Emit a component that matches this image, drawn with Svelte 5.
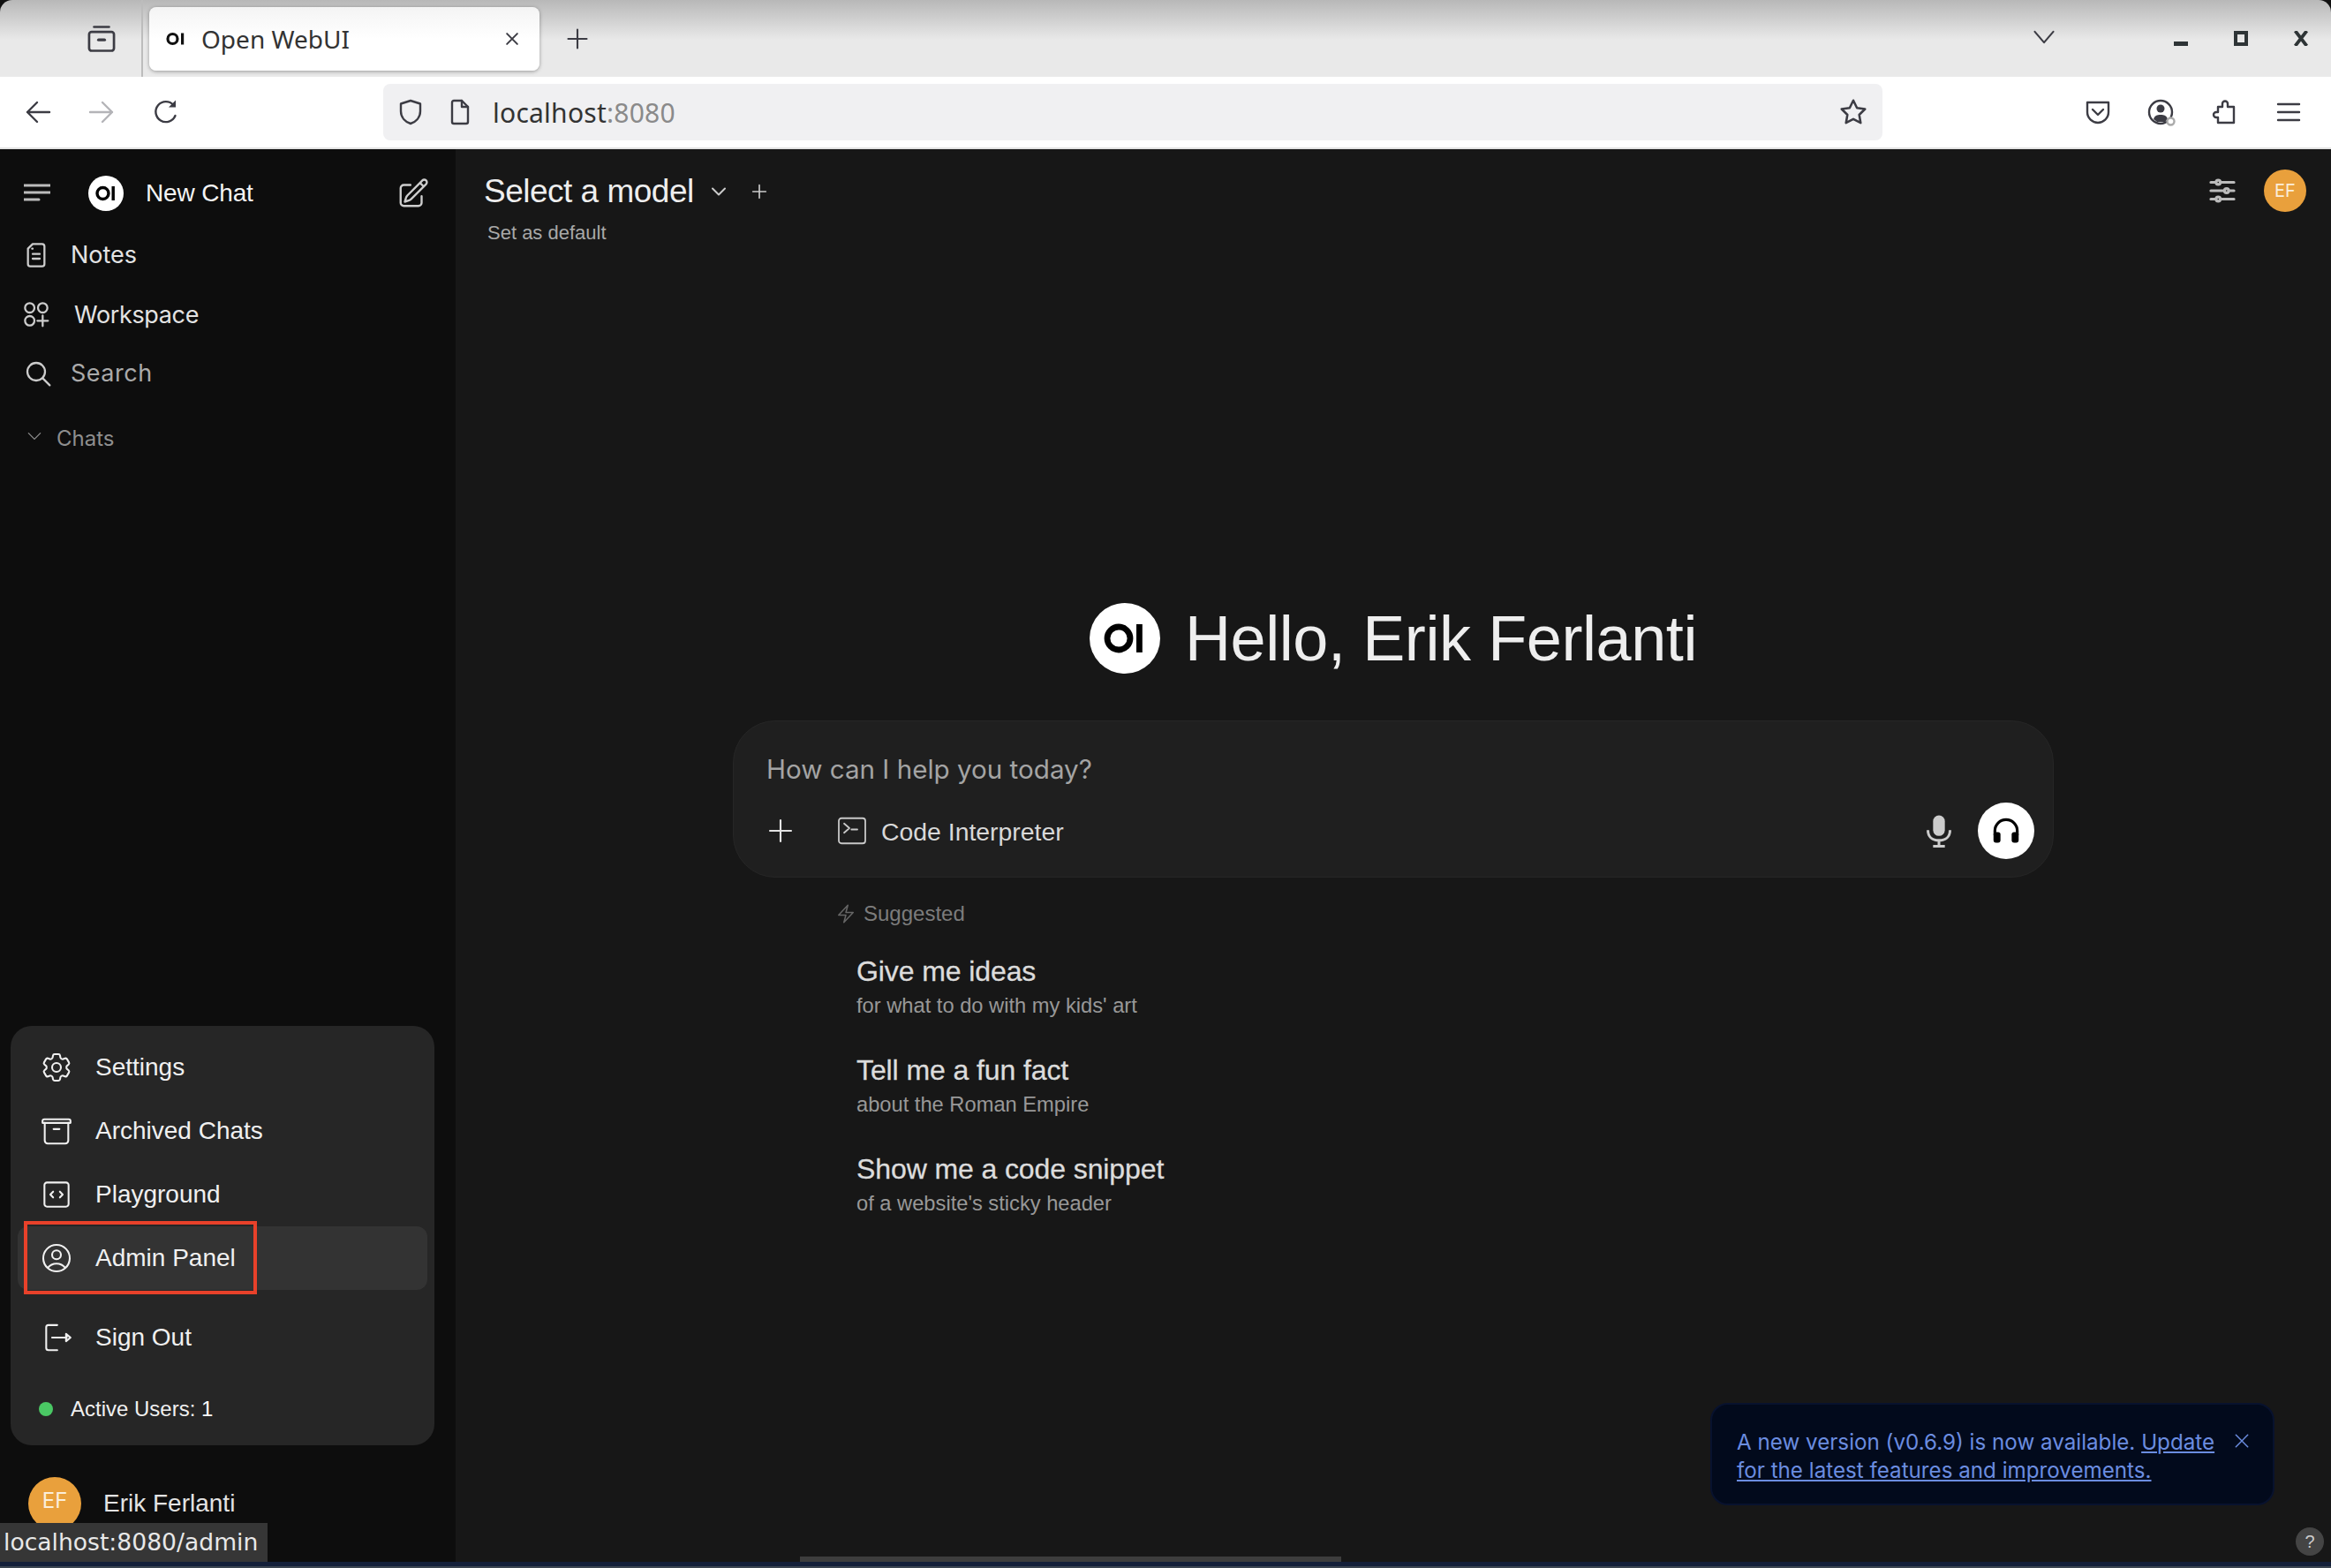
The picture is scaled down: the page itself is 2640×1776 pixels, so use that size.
<script>
	const menuTop = [
		{
			label: 'Settings',
			paths: [
				'M9.594 3.94c.09-.542.56-.94 1.11-.94h2.593c.55 0 1.02.398 1.11.94l.213 1.281c.063.374.313.686.645.87.074.04.147.083.22.127.325.196.72.257 1.075.124l1.217-.456a1.125 1.125 0 0 1 1.37.49l1.296 2.247a1.125 1.125 0 0 1-.26 1.431l-1.003.827c-.293.241-.438.613-.43.992a7.723 7.723 0 0 1 0 .255c-.008.378.137.75.43.991l1.004.827c.424.35.534.955.26 1.43l-1.298 2.247a1.125 1.125 0 0 1-1.369.491l-1.217-.456c-.355-.133-.75-.072-1.076.124a6.47 6.47 0 0 1-.22.128c-.331.183-.581.495-.644.869l-.213 1.281c-.09.543-.56.94-1.11.94h-2.594c-.55 0-1.019-.398-1.11-.94l-.213-1.281c-.062-.374-.312-.686-.644-.87a6.52 6.52 0 0 1-.22-.127c-.325-.196-.72-.257-1.076-.124l-1.217.456a1.125 1.125 0 0 1-1.369-.49l-1.297-2.247a1.125 1.125 0 0 1 .26-1.431l1.004-.827c.292-.24.437-.613.43-.991a6.932 6.932 0 0 1 0-.255c.007-.38-.138-.751-.43-.992l-1.004-.827a1.125 1.125 0 0 1-.26-1.43l1.297-2.247a1.125 1.125 0 0 1 1.37-.491l1.216.456c.356.133.751.072 1.076-.124.072-.044.146-.086.22-.128.332-.183.582-.495.644-.869l.214-1.28Z',
				'M15 12a3 3 0 1 1-6 0 3 3 0 0 1 6 0Z'
			]
		},
		{
			label: 'Archived Chats',
			paths: [
				'M2.5 5.2c0-.7.5-1.2 1.2-1.2h16.6c.7 0 1.2.5 1.2 1.2v1.3H2.5Z',
				'M4 6.5v12a2 2 0 0 0 2 2h12a2 2 0 0 0 2-2v-12',
				'M10 10.7h4'
			]
		},
		{
			label: 'Playground',
			paths: [
				'M5.5 3.8h13a1.7 1.7 0 0 1 1.7 1.7v13a1.7 1.7 0 0 1-1.7 1.7h-13a1.7 1.7 0 0 1-1.7-1.7v-13a1.7 1.7 0 0 1 1.7-1.7Z',
				'M9.7 10 7.8 12l1.9 2',
				'M14.3 10l1.9 2-1.9 2'
			]
		}
	];

	const userCircle =
		'M17.982 18.725A7.488 7.488 0 0 0 12 15.75a7.488 7.488 0 0 0-5.982 2.975m11.963 0a9 9 0 1 0-11.963 0m11.963 0A8.966 8.966 0 0 1 12 21a8.966 8.966 0 0 1-5.982-2.275M15 9.75a3 3 0 1 1-6 0 3 3 0 0 1 6 0Z';

	const suggestions = [
		{ title: 'Give me ideas', sub: "for what to do with my kids' art" },
		{ title: 'Tell me a fun fact', sub: 'about the Roman Empire' },
		{ title: 'Show me a code snippet', sub: "of a website's sticky header" }
	];
</script>

<div class="window">
	<header class="tabbar">
		<svg class="ff tabview" viewBox="0 0 32 32">
			<path d="M8.5 4h15" />
			<rect x="3.5" y="9" width="25" height="19" rx="2.5" />
			<path d="M13 17h6" class="thick" />
		</svg>
		<div class="sep"></div>
		<div class="tab">
			<svg class="fav" viewBox="0 0 24 24">
				<circle cx="8.5" cy="12" r="5.5" fill="none" stroke="#111" stroke-width="3.2" />
				<rect x="18" y="5.5" width="3.2" height="13" fill="#111" />
			</svg>
			<span class="tab-title">Open WebUI</span>
			<svg class="ff tab-x" viewBox="0 0 24 24"><path d="M5 5l14 14M19 5 5 19" /></svg>
		</div>
		<svg class="ff newtab" viewBox="0 0 32 32"><path d="M16 4v24M4 16h24" /></svg>
		<svg class="ff tablist" viewBox="0 0 32 20"><path d="M4 3l12 14L28 3" /></svg>
		<div class="winctl">
			<svg viewBox="0 0 16 17"><rect x="0" y="12" width="16" height="5" fill="#2e3436" /></svg>
			<svg viewBox="0 0 16 17"><path d="M0 0h16v17H0ZM4 4v9h8V4Z" fill="#2e3436" fill-rule="evenodd" /></svg>
			<svg viewBox="0 0 16 17"><path d="M1.500 0l13 17M14.500 0l-13 17" stroke="#2e3436" stroke-width="3.800" fill="none" /></svg>
		</div>
	</header>

	<nav class="navbar">
		<svg class="ff nav-btn" viewBox="0 0 32 32"><path d="M29 16H4M15 5 4 16l11 11" /></svg>
		<svg class="ff nav-btn disabled" viewBox="0 0 32 32"><path d="M3 16h25M17 5l11 11-11 11" /></svg>
		<svg class="ff nav-btn reload" viewBox="0 0 32 32">
			<path d="M26.5 20a11.5 11.5 0 1 1-2-12" />
			<path d="M27 2.5v8h-8Z" class="solid" />
		</svg>
		<div class="urlbar">
			<svg class="ff url-icon" viewBox="0 0 32 32"><path d="M16 3 5 6.500V15c0 7 5 12 11 14 6-2 11-7 11-14V6.500Z" /></svg>
			<svg class="ff url-icon doc" viewBox="0 0 32 32"><path d="M7 5a2 2 0 0 1 2-2h9l7 7v17a2 2 0 0 1-2 2H9a2 2 0 0 1-2-2Z" /><path d="M18 3v7h7" /></svg>
			<span class="url"><span class="host">localhost</span><span class="port">:8080</span></span>
			<svg class="ff star" viewBox="0 0 32 32"><path d="M16 3.500l3.900 8 8.600 1.200-6.200 6.100 1.500 8.700L16 23.400l-7.800 4.100 1.500-8.700-6.200-6.100 8.600-1.200Z" /></svg>
		</div>
		<div class="nav-right">
			<svg class="ff" viewBox="0 0 32 32"><path d="M4 5h24v11c0 7-6 12-12 12S4 23 4 16Z" /><path d="M10 13l6 6 6-6" /></svg>
			<svg class="ff" viewBox="0 0 32 32">
				<circle cx="15" cy="16" r="13" />
				<circle cx="15" cy="12" r="4.500" class="solid" />
				<path d="M7 24c1-4 4-5 8-5s7 1 8 5l-3 3h-9Z" class="solid" />
				<circle cx="26.500" cy="26.500" r="4" class="badge" />
			</svg>
			<svg class="ff" viewBox="0 0 32 32"><path d="M13 10V6.500a3 3 0 0 1 6 0V10h7v18H8v-6H6a3 3 0 0 1 0-6h2v-6Z" /></svg>
			<svg class="ff" viewBox="0 0 32 32"><path d="M4 7h24M4 16h24M4 25h24" /></svg>
		</div>
	</nav>

	<div class="app">
		<aside class="sidebar">
			<div class="side-head">
				<svg class="ic burger" viewBox="0 0 30 24"><path d="M0 3h30M0 11h30M0 19h17" /></svg>
				<svg class="logo small" viewBox="0 0 40 40">
					<circle cx="20" cy="20" r="20" fill="#fff" />
					<circle cx="16.500" cy="20" r="6.500" fill="none" stroke="#000" stroke-width="3.400" />
					<rect x="26.500" y="12" width="3.400" height="16" fill="#000" />
				</svg>
				<span class="new-chat">New Chat</span>
				<svg class="ic edit" viewBox="0 0 24 24"><path d="m16.862 4.487 1.687-1.688a1.875 1.875 0 1 1 2.652 2.652L10.582 16.070a4.500 4.500 0 0 1-1.897 1.130L6 18l.8-2.685a4.500 4.500 0 0 1 1.130-1.897l8.932-8.931Zm0 0L19.500 7.125M18 14v4.750A2.250 2.250 0 0 1 15.750 21H5.250A2.250 2.250 0 0 1 3 18.750V8.250A2.250 2.250 0 0 1 5.250 6H10" /></svg>
			</div>
			<div class="side-row notes">
				<svg class="ic" viewBox="0 0 24 24"><path d="M9 2.500h8a2 2 0 0 1 2 2v15a2 2 0 0 1-2 2H7a2 2 0 0 1-2-2V6.500Z" /><path d="M9 11h6M9 15h6M8.500 6.500h.5" /></svg>
				<span>Notes</span>
			</div>
			<div class="side-row workspace">
				<svg class="ic" viewBox="0 0 24 24"><circle cx="6.500" cy="6.500" r="4" /><circle cx="17.500" cy="6.500" r="4" /><circle cx="6.500" cy="17.500" r="4" /><path d="M17.500 13v9M13 17.500h9" /></svg>
				<span>Workspace</span>
			</div>
			<div class="side-row search">
				<svg class="ic" viewBox="0 0 24 24"><circle cx="10.500" cy="10.500" r="7.500" /><path d="m16 16 6 6" /></svg>
				<span>Search</span>
			</div>
			<div class="chats">
				<svg class="ic" viewBox="0 0 24 24"><path d="m4 8 8 8 8-8" /></svg>
				<span>Chats</span>
			</div>

			<div class="menu">
				{#each menuTop as item}
					<div class="menu-row">
						<svg class="ic" viewBox="0 0 24 24">
							{#each item.paths as d}<path {d} />{/each}
						</svg>
						<span>{item.label}</span>
					</div>
				{/each}
				<div class="menu-row active">
					<svg class="ic" viewBox="0 0 24 24"><path d={userCircle} /></svg>
					<span>Admin Panel</span>
					<div class="callout"></div>
				</div>
				<div class="menu-row signout">
					<svg class="ic" viewBox="0 0 24 24">
						<path d="M12.500 3.500H6.500a1.500 1.500 0 0 0-1.500 1.500v14a1.500 1.500 0 0 0 1.500 1.500h6" />
						<path d="M9 12h10" />
						<path d="M18.500 9.500 21.500 12l-3 2.500Z" />
					</svg>
					<span>Sign Out</span>
				</div>
				<div class="active-users">
					<i class="dot"></i>
					<span>Active Users: <b>1</b></span>
				</div>
			</div>

			<div class="user">
				<div class="avatar big">EF</div>
				<span>Erik Ferlanti</span>
			</div>
			<div class="status">localhost:8080/admin</div>
		</aside>

		<main class="main">
			<div class="topbar">
				<div class="model">
					<div class="model-row">
						<span class="model-name">Select a model</span>
						<svg class="ic chev" viewBox="0 0 24 24"><path d="m5 8.500 7 7 7-7" /></svg>
						<svg class="ic plus" viewBox="0 0 24 24"><path d="M12 4v16M4 12h16" /></svg>
					</div>
					<div class="set-default">Set as default</div>
				</div>
				<svg class="ic sliders" viewBox="0 0 24 24"><path d="M10.500 6h9.750M10.500 6a1.500 1.500 0 1 1-3 0m3 0a1.500 1.500 0 1 0-3 0M3.750 6H7.500m3 12h9.750m-9.750 0a1.500 1.500 0 0 1-3 0m3 0a1.500 1.500 0 0 0-3 0m-3.750 0H7.500m9-6h3.750m-3.750 0a1.500 1.500 0 0 1-3 0m3 0a1.500 1.500 0 0 0-3 0m-9.750 0h9.750" /></svg>
				<div class="avatar">EF</div>
			</div>

			<div class="hello">
				<svg class="logo" viewBox="0 0 40 40">
					<circle cx="20" cy="20" r="20" fill="#fff" />
					<circle cx="16.500" cy="20" r="6.500" fill="none" stroke="#000" stroke-width="3.400" />
					<rect x="26.500" y="12" width="3.400" height="16" fill="#000" />
				</svg>
				<h1>Hello, Erik Ferlanti</h1>
			</div>

			<div class="composer">
				<div class="placeholder">How can I help you today?</div>
				<div class="tools">
					<svg class="ic add" viewBox="0 0 24 24"><path d="M12 3v18M3 12h18" /></svg>
					<svg class="ic term" viewBox="0 0 24 24"><rect x="2" y="2.500" width="20" height="19" rx="2" /><path d="m6 6.500 4 3.500-4 3.500M11.500 11H16" /></svg>
					<span class="code-label">Code Interpreter</span>
					<svg class="mic" viewBox="0 0 24 24">
						<rect x="8" y="1.500" width="8" height="14" rx="4" fill="#ccc" />
						<path d="M4.500 11.500c0 4.500 3 7 7.500 7s7.500-2.500 7.500-7M12 18.500v3.500M8 22.500h8" fill="none" stroke="#ccc" stroke-width="1.800" />
					</svg>
					<div class="voice">
						<svg viewBox="0 0 24 24">
							<path d="M4 15v-3a8 8 0 0 1 16 0v3" fill="none" stroke="#000" stroke-width="2" />
							<rect x="3" y="13" width="5" height="7.500" rx="1.800" fill="#000" />
							<rect x="16" y="13" width="5" height="7.500" rx="1.800" fill="#000" />
						</svg>
					</div>
				</div>
			</div>

			<div class="suggest">
				<div class="suggest-label">
					<svg class="ic" viewBox="0 0 24 24"><path d="M3.750 13.500l10.500-11.250L12 10.500h8.250L9.750 21.750 12 13.500H3.750z" /></svg>
					<span>Suggested</span>
				</div>
				{#each suggestions as s}
					<div class="suggest-item">
						<div class="s-title">{s.title}</div>
						<div class="s-sub">{s.sub}</div>
					</div>
				{/each}
			</div>

			<div class="toast">
				<p>A new version (v0.6.9) is now available. <u>Update for the latest features and improvements.</u></p>
				<svg class="ic toast-x" viewBox="0 0 24 24"><path d="M4 4l16 16M20 4 4 20" /></svg>
			</div>
			<div class="help">?</div>
			<div class="thumb"></div>
		</main>
	</div>
	<div class="bottom"></div>
</div>

<style>
	:global(body) {
		margin: 0;
		background: #101010;
	}

	.window {
		width: 2640px;
		height: 1776px;
		display: flex;
		flex-direction: column;
		overflow: hidden;
		border-radius: 14px 14px 0 0;
		font-family: 'Liberation Sans', Arial, sans-serif;
	}

	svg {
		display: block;
		flex: none;
	}

	/* browser chrome */
	.ff {
		fill: none;
		stroke: #3c3c44;
		stroke-width: 2.4;
		stroke-linejoin: round;
		stroke-linecap: round;
	}

	.ff .solid {
		fill: #3c3c44;
		stroke: none;
	}

	.ff .badge {
		fill: #fff;
		stroke: #aaa;
	}

	.ff .thick {
		stroke-width: 3;
	}

	.tabbar {
		height: 87px;
		display: flex;
		align-items: center;
		position: relative;
		background: linear-gradient(#b8b8b8, #e9e9e9 52%, #e9e9e9);
	}

	.tabview {
		width: 36px;
		height: 36px;
		margin-left: 97px;
	}

	.sep {
		width: 2px;
		height: 87px;
		margin-left: 27px;
		background: #bcbcbc;
	}

	.tab {
		width: 442px;
		height: 72px;
		margin-left: 7px;
		box-sizing: border-box;
		padding: 0 21px 0 18px;
		display: flex;
		align-items: center;
		background: linear-gradient(#f4f4f4, #fff 50%);
		border-radius: 8px;
		box-shadow: 0 1px 4px rgba(0, 0, 0, 0.35);
	}

	.fav {
		width: 24px;
		height: 24px;
	}

	.tab-title {
		margin-left: 17px;
		font: 28px 'Noto Sans', sans-serif;
		color: #333;
	}

	.tab-x {
		width: 20px;
		height: 20px;
		margin-left: auto;
	}

	.newtab {
		width: 28px;
		height: 28px;
		margin-left: 29px;
	}

	.tablist {
		width: 28px;
		height: 18px;
		margin-left: auto;
		margin-right: 133px;
		margin-bottom: 3px;
	}

	.winctl {
		display: flex;
		gap: 52px;
		margin-right: 26px;
	}

	.winctl svg {
		width: 16px;
		height: 17px;
	}

	.navbar {
		height: 80px;
		display: flex;
		align-items: center;
		background: #fff;
		border-bottom: 2px solid #e2e2e2;
	}

	.nav-btn {
		width: 32px;
		height: 32px;
		margin-left: 40px;
	}

	.nav-btn:first-child {
		margin-left: 27px;
	}

	.nav-btn.reload {
		margin-left: 41px;
	}

	.nav-btn.reload + .urlbar {
		margin-left: 230px;
	}

	.nav-btn.disabled {
		stroke: #b4b4b8;
	}

	.urlbar {
		width: 1698px;
		height: 64px;
		box-sizing: border-box;
		padding: 0 16px 0 15px;
		display: flex;
		align-items: center;
		background: #f0f0f2;
		border-radius: 8px;
	}

	.url-icon {
		width: 32px;
		height: 32px;
	}

	.url-icon.doc {
		margin-left: 24px;
	}

	.url {
		margin-left: 21px;
		font: 30px 'Noto Sans', sans-serif;
		letter-spacing: 0.25px;
	}

	.host {
		color: #333;
	}

	.port {
		color: #8a8a8a;
	}

	.star {
		width: 34px;
		height: 34px;
		margin-left: auto;
	}

	.nav-right {
		display: flex;
		gap: 40px;
		margin-left: 228px;
	}

	.nav-right svg {
		width: 32px;
		height: 32px;
	}

	/* app */
	.app {
		height: 1600px;
		display: flex;
	}

	.ic {
		fill: none;
		stroke: currentColor;
		stroke-width: 1.5;
		stroke-linecap: round;
		stroke-linejoin: round;
	}

	.sidebar {
		width: 516px;
		flex: none;
		display: flex;
		flex-direction: column;
		position: relative;
		background: #0d0d0d;
		color: #e3e3e3;
	}

	.side-head {
		height: 72px;
		padding-top: 14px;
		display: flex;
		align-items: center;
	}

	.burger {
		width: 30px;
		height: 24px;
		margin-left: 27px;
		stroke-width: 3;
		color: #bbb;
	}

	.logo {
		width: 80px;
		height: 80px;
	}

	.logo.small {
		width: 40px;
		height: 40px;
		margin-left: 43px;
	}

	.new-chat {
		margin-left: 25px;
		font-size: 28px;
		letter-spacing: -0.15px;
		color: #f4f4f4;
	}

	.edit {
		width: 38px;
		height: 38px;
		margin-left: auto;
		margin-right: 29px;
		color: #cdcdcd;
	}

	.side-row {
		height: 67px;
		display: flex;
		align-items: center;
		font-family: Inter, sans-serif;
		font-size: 27px;
	}

	.side-row svg {
		width: 32px;
		height: 32px;
		margin-left: 25px;
		stroke-width: 1.7;
		color: #ccc;
	}

	.side-row span {
		margin-left: 23px;
	}

	.workspace span {
		margin-left: 27px;
		margin-top: 2px;
		letter-spacing: -0.35px;
	}

	.search {
		color: #aaa;
	}

	.search svg {
		margin-left: 27px;
	}

	.search span {
		margin-left: 21px;
		letter-spacing: 0.5px;
	}

	.chats {
		height: 40px;
		margin-top: 20px;
		display: flex;
		align-items: center;
		font-family: Inter, sans-serif;
		font-size: 24px;
		color: #8e8e8e;
	}

	.chats svg {
		width: 20px;
		height: 20px;
		margin-left: 29px;
		margin-bottom: 4px;
	}

	.chats span {
		margin-left: 15px;
	}

	.menu {
		margin: auto 24px 0 12px;
		padding: 11px 8px 21px;
		background: #262626;
		border-radius: 24px;
		font-size: 28px;
		color: #f0f0f0;
	}

	.menu-row {
		height: 72px;
		box-sizing: border-box;
		padding-left: 24px;
		display: flex;
		align-items: center;
		gap: 24px;
		position: relative;
		border-radius: 12px;
	}

	.menu-row svg {
		width: 40px;
		height: 40px;
		stroke-width: 1.25;
	}

	.menu-row.active {
		background: #333;
	}

	.menu-row.signout {
		margin-top: 18px;
	}

	.callout {
		position: absolute;
		left: 7px;
		top: -6px;
		width: 264px;
		height: 83px;
		box-sizing: border-box;
		border: 4px solid #e8412a;
	}

	.active-users {
		height: 40px;
		margin-top: 25px;
		padding-left: 24px;
		display: flex;
		align-items: center;
		gap: 20px;
		font-size: 24px;
	}

	.active-users b {
		font-weight: 400;
		color: #fff;
	}

	.dot {
		width: 16px;
		height: 16px;
		border-radius: 50%;
		background: #4ac864;
	}

	.user {
		height: 132px;
		box-sizing: border-box;
		padding-left: 32px;
		display: flex;
		align-items: center;
		gap: 25px;
		font-size: 28px;
	}

	.avatar {
		width: 48px;
		height: 48px;
		flex: none;
		display: flex;
		align-items: center;
		justify-content: center;
		border-radius: 50%;
		background: #e9a03c;
		color: #fbeeda;
		font-family: Inter, sans-serif;
		font-size: 20px;
	}

	.avatar.big {
		width: 60px;
		height: 60px;
		font-size: 24px;
		padding-bottom: 8px;
		box-sizing: border-box;
	}

	.status {
		position: absolute;
		left: 0;
		bottom: 0;
		width: 303px;
		height: 44px;
		line-height: 44px;
		padding-left: 4px;
		box-sizing: border-box;
		background: #363636;
		color: #e8e8e8;
		font-family: 'DejaVu Sans', sans-serif;
		font-size: 26.600px;
		white-space: nowrap;
	}

	.main {
		flex: 1;
		position: relative;
		background: #171717;
		color: #e6e6e6;
	}

	.topbar {
		height: 120px;
		box-sizing: border-box;
		padding: 22px 28px 0 32px;
		display: flex;
		align-items: flex-start;
	}

	.model {
		margin-right: auto;
	}

	.model-row {
		height: 52px;
		display: flex;
		align-items: center;
	}

	.model-name {
		font-size: 37px;
		letter-spacing: -0.5px;
		color: #eee;
	}

	.chev {
		width: 24px;
		height: 24px;
		margin-left: 16px;
		stroke-width: 2;
		color: #ccc;
	}

	.plus {
		width: 22px;
		height: 22px;
		margin-left: 23px;
		stroke-width: 1.8;
		color: #ccc;
	}

	.set-default {
		margin: 8px 0 0 4px;
		font-size: 22px;
		color: #a8a8a8;
	}

	.sliders {
		width: 38px;
		height: 38px;
		margin-top: 6px;
		margin-right: 28px;
		stroke-width: 2;
		color: #bbb;
	}

	.topbar .avatar {
		margin-top: 1px;
	}

	.hello {
		margin-top: 394px;
		height: 80px;
		display: flex;
		align-items: center;
		justify-content: center;
		gap: 28px;
	}

	h1 {
		margin: 0;
		font-size: 72px;
		font-weight: 400;
		letter-spacing: -0.4px;
		color: #eee;
	}

	.composer {
		width: 1496px;
		height: 178px;
		margin: 53px auto 0;
		box-sizing: border-box;
		padding: 33px 21px 0 37px;
		background: #1f1f1f;
		border: 1px solid #262626;
		border-radius: 48px;
	}

	.placeholder {
		height: 42px;
		line-height: 42px;
		font-family: Inter, sans-serif;
		font-size: 29.600px;
		color: #a4a4a4;
	}

	.tools {
		height: 64px;
		margin-top: 17px;
		display: flex;
		align-items: center;
	}

	.add {
		width: 32px;
		height: 32px;
		stroke-width: 1.6;
		color: #e4e4e4;
	}

	.term {
		width: 36px;
		height: 36px;
		margin-left: 47px;
		stroke-width: 1.2;
		color: #c8c8c8;
	}

	.code-label {
		margin-left: 15px;
		margin-top: 2px;
		font-size: 28.400px;
		color: #d8d8d8;
	}

	.mic {
		width: 40px;
		height: 40px;
		margin-left: auto;
		margin-right: 24px;
	}

	.voice {
		width: 64px;
		height: 64px;
		display: flex;
		align-items: center;
		justify-content: center;
		border-radius: 50%;
		background: #fff;
	}

	.voice svg {
		width: 38px;
		height: 38px;
	}

	.suggest {
		width: 1496px;
		margin: 21px auto 0;
	}

	.suggest-label {
		height: 40px;
		padding-left: 116px;
		display: flex;
		align-items: center;
		gap: 8px;
		font-size: 24px;
		color: #7c7c7c;
	}

	.suggest-label svg {
		width: 24px;
		height: 24px;
		color: #666;
	}

	.suggest-label + .suggest-item {
		margin-top: 25px;
	}

	.suggest-item {
		height: 112px;
		padding-left: 140px;
	}

	.s-title {
		height: 40px;
		line-height: 40px;
		font-size: 32px;
		letter-spacing: -0.1px;
		-webkit-text-stroke: 0.3px #dcdcdc;
		color: #dcdcdc;
	}

	.s-sub {
		height: 34px;
		margin-top: 2px;
		line-height: 34px;
		font-size: 23.700px;
		color: #989898;
	}

	.toast {
		position: absolute;
		left: 1421px;
		top: 1420px;
		width: 639px;
		height: 116px;
		box-sizing: border-box;
		padding: 27px 25px 0 28px;
		display: flex;
		align-items: flex-start;
		background: #020a1c;
		border: 2px solid #08122e;
		border-radius: 20px;
		color: #6b8de0;
		font-family: Inter, sans-serif;
		font-size: 24.200px;
		line-height: 32px;
	}

	.toast p {
		margin: 0;
		flex: 1;
	}

	.toast-x {
		width: 20px;
		height: 20px;
		margin-left: 14px;
		margin-top: 4px;
		stroke-width: 1.8;
	}

	.help {
		position: absolute;
		right: 8px;
		top: 1561px;
		width: 32px;
		height: 32px;
		line-height: 32px;
		text-align: center;
		border-radius: 50%;
		background: #444;
		color: #ccc;
		font-size: 20px;
	}

	.thumb {
		position: absolute;
		left: 390px;
		bottom: 0;
		width: 613px;
		height: 6px;
		background: #3d3d3d;
	}

	.bottom {
		height: 7px;
		box-sizing: border-box;
		background: #14203a;
		border-bottom: 2px solid #3c4652;
	}
</style>
